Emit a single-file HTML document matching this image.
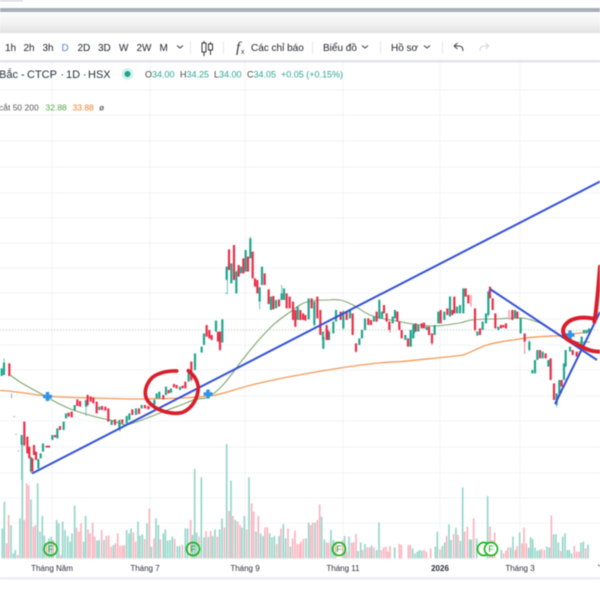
<!DOCTYPE html>
<html><head><meta charset="utf-8"><style>
html,body{margin:0;padding:0;width:600px;height:600px;overflow:hidden;background:#fff}
svg{display:block;filter:blur(.5px)}
text{font-family:"Liberation Sans","Noto Sans CJK SC",sans-serif}
.gb{stroke:#1ea48c;stroke-width:6.500;fill:none}.rb{stroke:#ea2c46;stroke-width:6.500;fill:none}
.gw{stroke:#55b8a6;stroke-width:2.500;fill:none}.rw{stroke:#ee6a7c;stroke-width:2.500;fill:none}
.vg{stroke:#96d6ca;stroke-width:5;fill:none}.vr{stroke:#f9b4c0;stroke-width:5;fill:none}
.tb{font-size:10px;fill:#1c202b}
.ax{font-size:8px;fill:#2a2e39;text-anchor:middle}
.f{fill:none;stroke:#1fb51f;stroke-width:1.700}.ft{font-size:9px;fill:#22a322;text-anchor:middle}
.plus{stroke:#2f93e6;stroke-width:3.500;fill:none}
.ma{fill:none}
</style></head><body>
<svg width="600" height="600" viewBox="0 0 600 600" xmlns="http://www.w3.org/2000/svg">
<defs><linearGradient id="hd" x1="0" y1="0" x2="0" y2="1"><stop offset="0" stop-color="#fbfbfb"/><stop offset=".5" stop-color="#f3f3f3"/><stop offset="1" stop-color="#e2e2e2"/></linearGradient></defs>
<rect width="600" height="600" fill="#fff"/>
<!-- grid -->
<path stroke="#f2f3f6" stroke-width="1" fill="none" d="M52 62V556M150 62V556M245 62V556M343 62V556M440 62V556M520 62V556M0 90H600M0 115H600M0 141H600M0 167H600M0 193H600M0 218H600M0 243H600M0 268H600M0 293H600M0 319H600M0 345H600M0 370H600M0 396H600M0 421H600M0 447H600M0 473H600M0 498H600M0 523H600"/>
<!-- top chrome -->
<rect x="0" y="0" width="23" height="1.500" fill="#d8d8d8"/>
<rect x="0" y="8" width="600" height="4" fill="#a9aeb9"/>
<rect x="0" y="12" width="600" height="21" fill="url(#hd)"/>
<rect x="0" y="33" width="600" height="27" fill="#fff"/>
<rect x="0" y="60" width="600" height="2.400" fill="#e1e3ec"/>
<text class="tb" x="5" y="51">1h</text><text class="tb" x="23.500" y="51">2h</text><text class="tb" x="42.500" y="51">3h</text>
<text class="tb" x="61.500" y="51" style="fill:#5b7fdc">D</text><text class="tb" x="77.500" y="51">2D</text><text class="tb" x="98" y="51">3D</text>
<text class="tb" x="119" y="51">W</text><text class="tb" x="136.500" y="51">2W</text><text class="tb" x="159.500" y="51">M</text>
<path d="M177 45.500l3 2.500 3-2.500M362 45.500l3 2.500 3-2.500M424 45.500l3 2.500 3-2.500" stroke="#444" stroke-width="1.100" fill="none"/>
<path d="M190.500 41V54M223.500 41V54M312.500 41V54M380.500 41V54M442.500 41V54" stroke="#e6e7ec" stroke-width="1"/>
<path d="M204 41V56M210.500 42V55" stroke="#333" stroke-width="1"/><rect x="202" y="43" width="4" height="9" fill="#fff" stroke="#333"/><rect x="208.500" y="44" width="4" height="6" fill="#fff" stroke="#333"/>
<text x="236" y="52" style="font-size:15px;font-family:'Liberation Serif',serif;font-style:italic" fill="#333">f</text><text x="241" y="54" style="font-size:7px" fill="#333">x</text>
<text class="tb" x="251" y="51">Các chỉ báo</text><text class="tb" x="323" y="51">Biểu đồ</text><text class="tb" x="391" y="51">Hồ sơ</text>
<path d="M454 46l3.500-3M454 46l3.500 3M454 46H459Q463 46 463 51" stroke="#444" stroke-width="1.100" fill="none"/>
<path d="M489 46l-3.500-3M489 46l-3.500 3M489 46H484Q480 46 480 51" stroke="#d3d5db" stroke-width="1.100" fill="none"/>
<g style="font-size:11px" fill="#2a2e39"><text x="-1" y="78">Bắc -</text><text x="27" y="78">CTCP</text><text x="60.500" y="78">·</text><text x="66" y="78">1D</text><text x="83" y="78">·</text><text x="88" y="78">HSX</text></g>
<circle cx="127.500" cy="74" r="6" fill="#d5f1ec"/><circle cx="127.500" cy="74" r="3" fill="#1ea48c"/>
<g style="font-size:9px" fill="#2ba594">
<text x="145" y="77.500"><tspan fill="#444">O</tspan>34.00</text><text x="180" y="77.500"><tspan fill="#444">H</tspan>34.25</text><text x="214" y="77.500"><tspan fill="#444">L</tspan>34.00</text><text x="247" y="77.500"><tspan fill="#444">C</tspan>34.05</text><text x="281" y="77.500">+0.05 (+0.15%)</text>
</g>
<g style="font-size:8.500px"><text x="-1" y="110.500" fill="#555">cắt 50 200</text><text x="45.500" y="110.500" fill="#52a447">32.88</text><text x="72.500" y="110.500" fill="#f07a2a">33.88</text><text x="99" y="110.500" fill="#444">ø</text></g>
<!-- price line -->
<path d="M0 330H600" stroke="#a9c4b8" stroke-width="1" stroke-dasharray="1 2" fill="none"/>
<!-- volumes -->
<g transform="translate(0,440) scale(.33333)">
<path class="vg" d="M7 355V265M13 355V185M33 355V255M40 355V340M46 355V330M60 355V235M67 355V10M93 355V178M113 355V130M120 355V275M127 355V228M133 355V287M147 355V295M154 355V290M170 355V240M176 355V250M188 355V245M195 355V270M203 355V288M210 355V305M216 355V280M224 355V197M251 355V305M257 355V228M291 355V302M297 355V300M312 355V300M340 355V315M380 355V270M387 355V280M393 355V265M414 355V245M420 355V287M427 355V283M441 355V250M454 355V320M468 355V235M475 355V255M490 355V280M496 355V268M503 355V302M510 355V300M517 355V290M532 355V318M539 355V318M556 355V265M563 355V265M578 355V285M584 355V87M590 355V278M604 355V112M612 355V292M625 355V290M638 355V288M645 355V268M659 355V268M666 355V235M680 355V12M693 355V122M706 355V240M726 355V263M733 355V228M747 355V112M768 355V275M782 355V280M789 355V288M809 355V280M816 355V292M823 355V288M837 355V288M850 355V252M857 355V295M871 355V320"/>
<path class="vr" d="M20 355V310M26 355V225M53 355V345M73 355V240M80 355V130M86 355V135M100 355V260M106 355V255M140 355V310M160 355V300M182 355V345M230 355V263M237 355V275M243 355V250M264 355V268M270 355V280M278 355V248M284 355V290M305 355V270M319 355V288M326 355V286M333 355V320M346 355V310M353 355V280M360 355V317M367 355V317M373 355V315M400 355V277M407 355V305M434 355V297M448 355V205M462 355V295M481 355V298M524 355V297M547 355V315M572 355V240M597 355V290M618 355V273M632 355V273M652 355V290M673 355V263M687 355V213M699 355V228M713 355V245M720 355V255M740 355V268M755 355V190M761 355V215M775 355V228M795 355V262M802 355V262M830 355V312M843 355V265M864 355V265M878 355V295M885 355V272M892 355V312M899 355V312"/>
</g>
<g transform="translate(300,440) scale(.33333)">
<path class="vg" d="M18 355V295M26 355V248M45 355V248M65 355V230M73 355V298M93 355V270M100 355V300M134 355V288M147 355V290M174 355V333M182 355V307M195 355V312M215 355V317M230 355V330M237 355V247M284 355V322M338 355V325M345 355V340M352 355V335M358 355V330M365 355V332M406 355V320M412 355V275M427 355V318M434 355V307M447 355V253M453 355V300M468 355V263M481 355V303M488 355V142M509 355V298M514 355V298M530 355V295M563 355V168M604 355V330M632 355V322M639 355V290M659 355V277M686 355V323M692 355V292M698 355V297M705 355V323M712 355V332M719 355V330M741 355V320M748 355V322M761 355V283M768 355V282M775 355V308M788 355V290M795 355V280M802 355V330M808 355V330M815 355V340M843 355V308M850 355V305M864 355V313"/>
<path class="vr" d="M3 355V305M10 355V297M32 355V255M38 355V248M52 355V240M59 355V193M80 355V307M86 355V308M107 355V305M128 355V300M140 355V335M155 355V307M161 355V307M168 355V282M188 355V330M202 355V322M209 355V322M222 355V322M244 355V330M251 355V322M258 355V320M264 355V335M270 355V318M298 355V312M304 355V315M325 355V315M331 355V315M372 355V330M379 355V335M392 355V325M420 355V328M440 355V288M461 355V282M474 355V285M494 355V275M502 355V260M521 355V235M570 355V260M577 355V300M584 355V278M611 355V340M618 355V332M624 355V322M646 355V330M651 355V318M666 355V310M672 355V263M679 355V310M725 355V327M733 355V330M754 355V227M782 355V333M823 355V318M830 355V335M837 355V335M857 355V325"/>
</g>
<!-- F markers -->
<circle class="f" cx="50.500" cy="549" r="6.500"/><circle class="f" cx="193" cy="549" r="6.500"/><circle class="f" cx="339" cy="549" r="6.500"/><circle class="f" cx="484" cy="549" r="6.500"/><circle cx="491" cy="549" r="6.500" fill="#fff"/><circle class="f" cx="491" cy="549" r="6.500"/>
<text class="ft" x="50.500" y="552">F</text><text class="ft" x="193" y="552">F</text><text class="ft" x="339" y="552">F</text><text class="ft" x="491" y="552">F</text>
<!-- axis -->
<rect x="0" y="577" width="600" height="2.500" fill="#eceef2"/>
<text class="ax" x="52" y="571">Tháng Năm</text><text class="ax" x="145" y="571">Tháng 7</text><text class="ax" x="245" y="571">Tháng 9</text><text class="ax" x="343" y="571">Tháng 11</text><text class="ax" x="440" y="571" style="font-weight:bold">2026</text><text class="ax" x="520" y="571">Tháng 3</text><path d="M598 565l2 1" stroke="#555"/>
<!-- moving averages -->
<path class="ma" stroke="#f39a58" stroke-width="1.300" d="M0 390.500C15 391 30 394 45 396C70 398 100 398 130 399C160 399 190 398 210 396C225 394 240 387 260 383C285 377 315 372 340 368C360 365 385 362 400 361.700C425 359 450 357 463 355C472 352 480 347 487 345C497 342 505 341 513 340C525 338 532 337 540 336.700C548 336 556 336 563 335.700C570 334 578 333 590 332"/>
<path class="ma" stroke="#7ea670" stroke-width="1.100" d="M10 375C13 377 17 380 20 382C28 387 38 392 45 396C55 402 65 407 73 410C85 414 98 418 110 420C117 422 122 425 127 425C140 421 150 417 160 413C172 408 185 404 193 400C200 398 203 399 207 398C214 394 218 390 223 385C230 377 235 370 240 363C246 355 252 348 257 342C262 336 268 330 273 325C280 319 287 314 293 310C298 306 302 303 307 302C315 300 322 300 330 300C335 299 337 300 340 300C345 301 349 303 353 305C360 309 365 313 370 315C377 318 384 319 390 320C398 321 405 323 413 324C420 325 427 326 433 326C442 326 452 324 460 323C465 322 468 320 472 320C480 319 490 319 497 319C506 318 515 318 523 318C530 319 535 321 540 323C547 327 553 332 560 335C566 338 571 341 577 342C582 343 586 342 590 342"/>
<!-- candles -->
<g transform="translate(0,340) scale(.33333)">
<path class="gw" d="M65 285V420M115 355V390M258 180V228M12 55V105M360 238V275M93 350V400"/>
<path class="rw" d="M73 245V320M263 163V200M463 175V195M574 65V125"/>
<path class="gb" d="M5 85V108M12 68V105M65 285V315M93 352V395M115 358V385M122 340V355M129 310V335M157 285V300M172 265V295M191 245V270M198 220V235M224 195V212M258 180V200M298 200V210M335 240V255M358 240V270M380 228V250M388 220V240M408 205V225M425 195V205M463 180V195M470 160V175M478 155V175M498 140V165M513 145V158M540 140V150M566 95V125M585 40V90"/>
<path class="rb" d="M28 70V108M73 245V315M82 290V340M88 320V355M97 355V395M102 315V345M108 335V360M140 317V323M147 317V323M165 285V292M180 258V270M206 218V230M215 215V232M232 178V198M240 183V200M263 165V195M272 170V185M280 172V190M290 185V220M306 198V210M316 200V212M325 205V245M345 238V255M367 238V250M397 208V225M417 205V222M435 195V205M445 198V208M490 165V178M506 150V160M522 132V142M530 135V145M548 137V145M556 125V145M574 65V120"/>
<path d="M35 160V175M40 230H45M46 283H51M53 333H58" stroke="#999" stroke-width="2.500" fill="none"/>
</g>
<g transform="translate(130,230) scale(.33333)">
<path class="gw" d="M285 190H292V110M389 170V238M361 20V85M319 120V190M553 215V290M579 305V358M455 165V210"/>
<path class="rw" d="M270 305V362M497 240V292"/>
<path class="gb" d="M215 350V368M222 310V345M258 272V305M277 268V338M290 110V150M304 100V160M319 125V190M333 110V130M347 60V125M361 25V85M389 172V215M396 110V165M423 200V240M438 210V235M455 190V210M462 175V210M503 230V270M536 205V268M553 215V285M579 305V330M597 305V330"/>
<path class="rb" d="M230 285V320M238 300V325M245 315V330M264 305V335M270 305V360M297 58V120M312 45V150M326 105V140M340 85V130M354 80V125M368 65V145M375 145V170M382 150V190M404 130V165M416 178V222M430 198V238M447 208V230M470 190V235M479 200V235M489 215V270M496 240V290M511 240V270M519 250V270M526 255V272M545 205V235M562 200V265M571 240V315M590 285V330"/>
</g>
<g transform="translate(300,280) scale(.33333)">
<path class="gw" d="M70 160V208M130 90V150M238 58V118"/>
<path class="rw" d="M168 190V218M270 125V158"/>
<path class="gb" d="M70 170V205M100 125V160M108 90V125M130 95V145M150 90V115M178 175V195M186 150V175M195 115V150M222 110V125M238 60V115M246 95V115M278 110V130M285 90V115M316 165V180M332 150V200M340 135V175M355 135V155"/>
<path class="rb" d="M83 150V180M122 95V120M140 95V120M158 100V165M168 190V215M205 115V135M213 120V135M230 95V125M252 75V100M260 100V125M268 125V150M292 95V125M298 125V150M305 150V175M324 175V200M347 130V155"/>
</g>
<g transform="translate(400,170) scale(.33333)">
<path class="gw" d="M150 378V440M265 362V440M388 510V545M470 670V712M497 540V590"/>
<path class="rw" d="M374 490V552M225 415V485M96 490V525"/>
<path class="gb" d="M32 490V530M42 462V490M80 470V480M104 465V495M115 425V460M133 425V450M150 380V440M171 410V430M180 405V430M190 355V430M232 485V497M248 455V480M258 430V460M265 365V435M295 470V480M345 420V445M362 445V490M388 515V540M397 600V610M405 570V610M412 540V570M428 545V565M445 570V590M470 670V705M478 630V670M492 580V630M497 540V590M510 530V545M545 500V525M552 480V490M560 480V490M567 475V485"/>
<path class="rb" d="M65 460V475M72 458V475M87 470V495M96 490V520M122 420V460M142 415V435M157 420V435M163 380V430M197 355V380M205 375V400M225 415V480M240 475V495M270 350V385M278 385V420M286 430V475M303 465V475M310 465V472M318 460V475M337 420V450M352 425V445M374 490V515M420 540V565M437 550V565M452 565V630M462 640V690M485 630V650M518 540V555M530 545V560"/>
<path d="M213 375V410M327 420V450M537 545V560" stroke="#f0a8b4" stroke-width="5" fill="none"/>
</g>
<!-- blue lines -->
<path d="M32 473.500L600 181.500M490 289L597 360M555 404L600 312" stroke="#3350d6" stroke-width="2" fill="none"/>
<!-- plus -->
<path class="plus" d="M43 396.500H52M47.500 392V401M203.500 394H212.500M208 389.500V398.500M565.500 335H574.500M570 330.500V339.500"/>
<!-- red annotations -->
<g transform="translate(130,230) scale(.33333)"><path d="M140 423C110 422 75 430 60 450C45 470 40 495 55 515C75 540 120 555 155 548C190 535 205 500 205 470C200 445 190 435 175 422" stroke="#d81e2a" stroke-width="11" fill="none" stroke-linecap="round"/></g>
<g transform="translate(400,170) scale(.33333)"><path d="M585 447C560 440 520 440 500 460C480 480 490 505 515 515C540 525 560 545 600 545M583 455C590 420 595 350 600 290" stroke="#d81e2a" stroke-width="12" fill="none" stroke-linecap="round"/></g>
</svg>
</body></html>
